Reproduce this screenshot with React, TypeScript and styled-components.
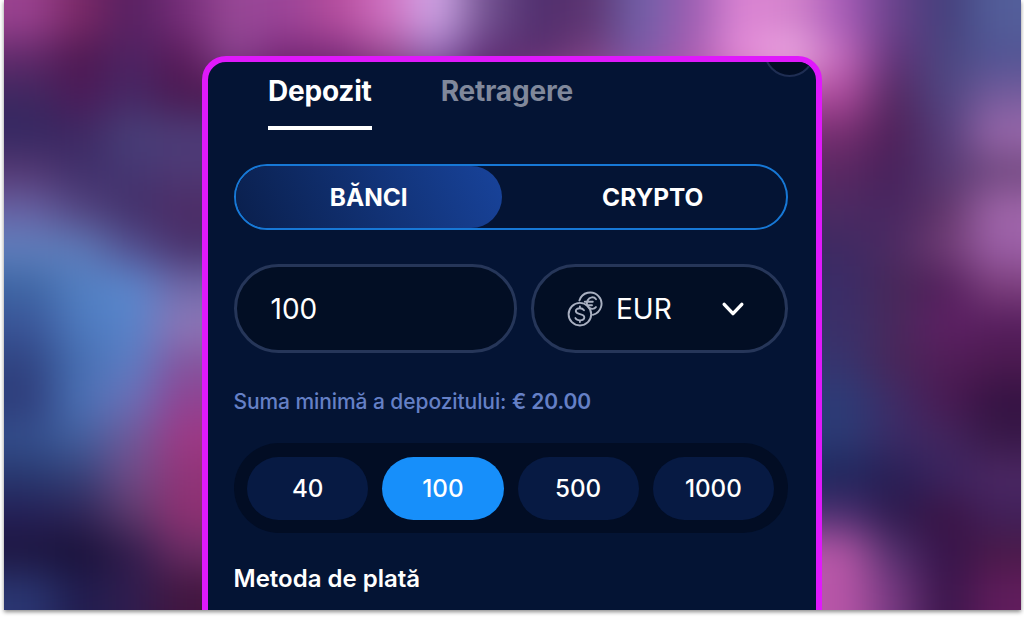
import React from "react";
import styled, { createGlobalStyle } from "styled-components";

const GlobalStyle = createGlobalStyle`
  * {
    box-sizing: border-box;
  }

  body {
    margin: 0;
    min-height: 100vh;
    background: #fff;
    font-family: Inter, "Liberation Sans", sans-serif;
  }

  button,
  input {
    font: inherit;
    color: inherit;
  }
`;

const amounts = [40, 100, 500, 1000];

const App = () => {
  const [tab, setTab] = React.useState("Depozit");
  const [method, setMethod] = React.useState("BĂNCI");
  const [amount, setAmount] = React.useState(100);

  return (
    <>
      <GlobalStyle />
      <Stage>
        <Backdrop />
        <Card>
          <CloseButton aria-label="Închide" />
          <Tabs>
            {["Depozit", "Retragere"].map((name) => (
              <Tab key={name} $active={tab === name} onClick={() => setTab(name)}>
                {name}
              </Tab>
            ))}
          </Tabs>
          <Switcher>
            {["BĂNCI", "CRYPTO"].map((name) => (
              <SwitcherItem
                key={name}
                $active={method === name}
                onClick={() => setMethod(name)}
              >
                {name}
              </SwitcherItem>
            ))}
          </Switcher>
          <Fields>
            <AmountInput
              value={amount}
              onChange={(e) => setAmount(Number(e.target.value) || 0)}
            />
            <CurrencySelect>
              <CoinsIcon />
              <span>EUR</span>
              <ChevronIcon />
            </CurrencySelect>
          </Fields>
          <Hint>
            Suma minimă a depozitului: <b>€ 20.00</b>
          </Hint>
          <Chips>
            {amounts.map((value) => (
              <Chip
                key={value}
                $active={amount === value}
                onClick={() => setAmount(value)}
              >
                {value}
              </Chip>
            ))}
          </Chips>
          <SectionTitle>Metoda de plată</SectionTitle>
        </Card>
      </Stage>
    </>
  );
};

export default App;

const Stage = styled.main`
  position: relative;
  display: flex;
  justify-content: center;
  width: 1017px;
  height: 610px;
  margin-left: 3.5px;
  padding-top: 55.5px;
  overflow: hidden;
  box-shadow: 0 2px 4px rgba(0, 0, 0, 0.45);
`;

const Card = styled.section`
  position: relative;
  width: 620px;
  height: 640px;
  flex-shrink: 0;
  padding: 11px 28.5px 0 25.5px;
  border: 6px solid #df19fb;
  border-radius: 24px;
  background: #041434;
  color: #fff;
  overflow: hidden;
`;

const CloseButton = styled.button`
  position: absolute;
  top: -36px;
  right: 1.5px;
  width: 51px;
  height: 51px;
  border: 2px solid #1f2e53;
  border-radius: 50%;
  background: #020d24;
`;

const Tabs = styled.nav`
  display: flex;
  gap: 69px;
  height: 57px;
  padding-left: 34.5px;
`;

const Tab = styled.button<{ $active: boolean }>`
  height: 57px;
  padding: 0 0 20px;
  border: 0;
  border-bottom: 4px solid ${(p) => (p.$active ? "#fff" : "transparent")};
  background: none;
  color: ${(p) => (p.$active ? "#fff" : "#80889b")};
  font-size: 28px;
  font-weight: 700;
  line-height: 36px;
  letter-spacing: -0.2px;
`;

const Switcher = styled.div`
  display: flex;
  height: 66px;
  margin-top: 34px;
  border: 2px solid #1778d6;
  border-radius: 33px;
  overflow: hidden;
`;

const SwitcherItem = styled.button<{ $active: boolean }>`
  flex: ${(p) => (p.$active ? "0 0 266.5px" : "1")};
  padding: ${(p) => (p.$active ? "1px 0 0" : "1px 0 0 18px")};
  border: 0;
  border-radius: 32px;
  background: ${(p) =>
    p.$active ? "linear-gradient(65deg, #0a1f4c, #18439b)" : "none"};
  font-size: 24.4px;
  font-weight: 700;
`;

const Fields = styled.div`
  display: flex;
  gap: 14px;
  height: 89px;
  margin-top: 34px;
  font-size: 28px;
`;

const AmountInput = styled.input`
  width: 283px;
  padding: 2px 34px 0;
  border: 3px solid #263659;
  border-radius: 45px;
  outline: 0;
  background: #020e24;
`;

const CurrencySelect = styled.button`
  display: flex;
  align-items: center;
  flex: 1;
  padding: 1px 40px 0 33.5px;
  border: 3px solid #263659;
  border-radius: 45px;
  background: #020e24;

  span {
    flex: 1;
    padding: 1px 0 0 13px;
    text-align: left;
  }
`;

const Hint = styled.p`
  margin: 35px 0 0;
  color: #6580c6;
  font-size: 21px;
  font-weight: 500;
  line-height: 28px;
  letter-spacing: -0.08px;
  white-space: nowrap;

  b {
    font-weight: 600;
  }
`;

const Chips = styled.div`
  display: grid;
  grid-template-columns: repeat(4, 1fr);
  gap: 14px;
  height: 90px;
  margin-top: 27.5px;
  padding: 13.5px;
  border-radius: 45px;
  background: #020d24;
`;

const Chip = styled.button<{ $active: boolean }>`
  padding: 0;
  border: 0;
  border-radius: 32px;
  background: ${(p) => (p.$active ? "#178ffa" : "#071a43")};
  font-size: 24.2px;
  font-weight: 500;
`;

const SectionTitle = styled.h2`
  margin: 29.5px 0 0;
  font-size: 24px;
  font-weight: 600;
  line-height: 32px;
`;

const CoinsIcon = () => (
  <svg width="36" height="36" viewBox="0 0 36 36" fill="none" stroke="#a9b0c1" strokeWidth="1.9" strokeLinecap="round">
    <path d="M12.4 9.5a11.3 11.3 0 1 1 13.4 14.3" />
    <circle cx="12.9" cy="23.2" r="11.3" />
    <path d="M29 8.2c-2-2.8-6.5-2.5-8.3 1-1.3 2.6-.7 5.5 1 7.3 2.2 2 5.5 1.7 7.2-.4M17.8 10.8h8M20 14.3h5" />
    <path d="M17 19.2c-1-1.5-2.5-2-4.2-2-2.3 0-4 1-4 2.9 0 4.2 8.5 1.8 8.5 6.2 0 2-1.9 3.1-4.3 3.1-2 0-3.7-.7-4.6-2.3M12.9 15.5v1.7M12.9 29.4v1.7" />
  </svg>
);

const ChevronIcon = () => (
  <svg width="24" height="16" viewBox="0 0 24 16" fill="none" stroke="#fff" strokeWidth="3.4" strokeLinecap="round" strokeLinejoin="round">
    <path d="M3.2 3.3 12 12.6l8.8-9.3" />
  </svg>
);

// blurred backdrop colours, four columns on each side of the card
const leftColors = [
  "9a4290 7a2865 562061 752d78",
  "61296a 4e1850 4e2464 581a58",
  "3e2860 4c1a58 452865 4a1850",
  "342862 3e2862 484079 4c3c78",
  "553872 3f2f6a 453672 4e3874",
  "6862a4 54447f 42306a 4d2c66",
  "6080be 5f7cba 545090 47326c",
  "3e66a4 5280c2 5b88ce 7068a8",
  "3a5598 4e7abe 5683ca 8e78b8",
  "304482 466fb2 5c7ec4 84559e",
  "2e3c7a 4a72b6 6a70b8 904292",
  "344f8d 42609f 6e5a9a 9e3884",
  "28386f 344078 704c88 903478",
  "241f56 2d2456 5c3a6c 8e3072",
  "1d153f 181038 2f1c4b 6a2c64",
  "2a3672 201c4e 2f1d4f 421640",
];

const rightColors = [
  "a85cb8 68418a 443f7b 535e9a",
  "c468bc 603278 4a467f 525494",
  "b04c9e 522860 4e4480 765c9c",
  "762e70 4d2058 523c78 9a68ac",
  "5a2862 46205a 553972 70487f",
  "4c2a62 472660 5f3468 a066aa",
  "3e2a62 4c2a62 703c74 9c60a8",
  "3a2c68 472858 501e5a 7e407e",
  "3a3069 48295c 5e2064 561e5e",
  "36346e 482658 511e58 4c1a50",
  "2c3c78 3e2c66 4a1a52 341242",
  "2b3a74 3a2b66 42265e 381848",
  "1e265c 281e54 3a2460 4c2864",
  "4c3070 2c1a4e 3b1444 40205a",
  "b858a8 50306c 34134a 4a1a48",
  "b856a8 743880 38154a 601c5c",
];

// the strip above the card
const topColors = [
  "984896 9a4498 b44c9c d070c0 d0a8e8 70508e 502e6e 5c3470 7060a8 9a5cb0 dc84d4 d484cc",
  "8a4490 782878 7c2c7c 98488f 9068b4 603078 5a2e6e 784080 7c5aa8 a85cb0 e68cd8 f0b0e6",
];

const cellWidth = 50.85;
const cellHeight = 38.1;
const bleed = 80;

const Backdrop = () => (
  <BackdropSvg viewBox="0 0 1017 610">
    <filter id="soften" filterUnits="userSpaceOnUse" x="-75" y="-75" width="1167" height="760" colorInterpolationFilters="sRGB">
      <feGaussianBlur stdDeviation="22 19" />
    </filter>
    <g filter="url(#soften)">
      {leftColors.map((left, row) => {
        const middle = topColors[Math.min(row, topColors.length - 1)];
        const colors = `${left} ${middle} ${rightColors[row]}`.split(" ");
        const top = row === 0 ? -bleed : row * cellHeight;
        const bottom =
          row === leftColors.length - 1 ? 610 + bleed : (row + 1) * cellHeight + 1;
        return colors.map((color, column) => {
          // behind the card only the side colours may bleed to its edge
          const shown =
            row < 2 || column < 4 || column > 15
              ? color
              : colors[column < 10 ? 3 : 16];
          const start = column === 0 ? -bleed : column * cellWidth;
          const end =
            column === colors.length - 1 ? 1017 + bleed : (column + 1) * cellWidth + 1;
          return (
            <rect
              key={`${row}-${column}`}
              x={start}
              y={top}
              width={end - start}
              height={bottom - top}
              fill={`#${shown}`}
            />
          );
        });
      })}
    </g>
  </BackdropSvg>
);

const BackdropSvg = styled.svg`
  position: absolute;
  inset: 0;
  width: 100%;
  height: 100%;
`;
